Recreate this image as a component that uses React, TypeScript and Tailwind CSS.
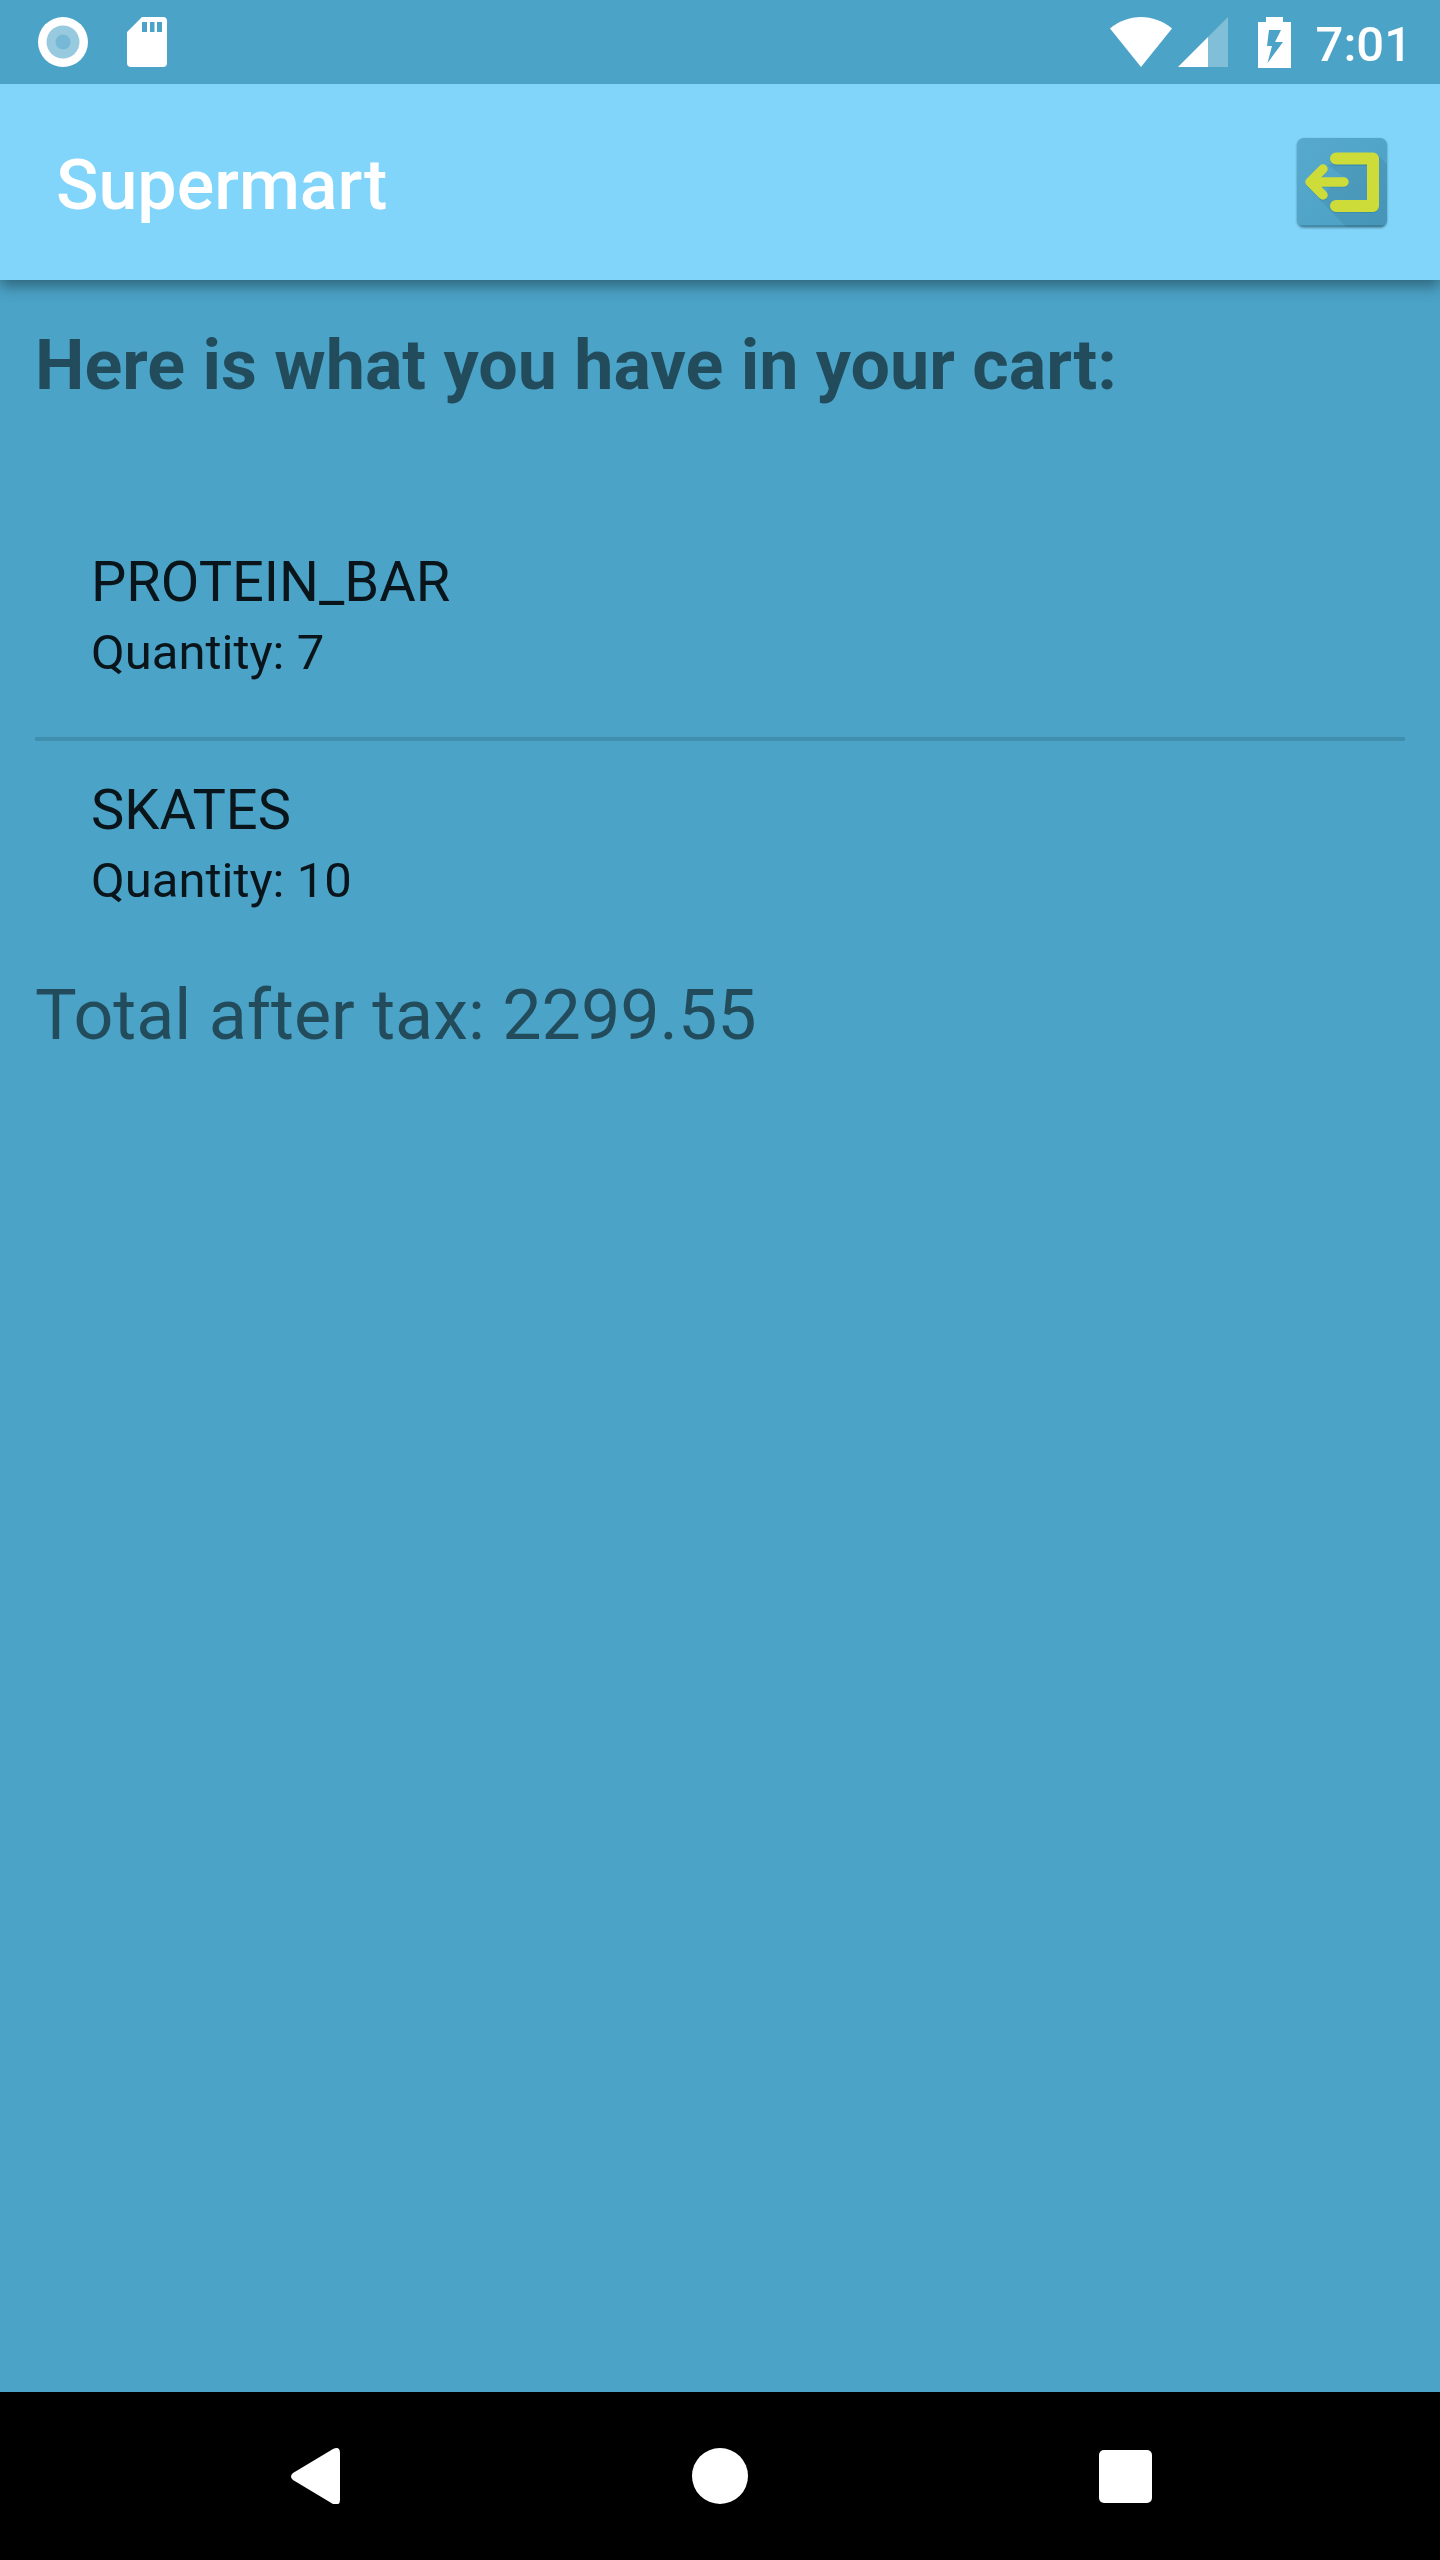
const items = [
  { name: 'PROTEIN_BAR', quantity: 7 },
  { name: 'SKATES', quantity: 10 },
];

function StatusBar() {
  return (
    <div className="relative z-10 flex h-[84px] items-center justify-between bg-[#4ba3c7] pl-[38px] pr-7 text-white">
      <div className="flex items-center gap-[39px]">
        <svg className="size-[50px]" viewBox="0 0 50 50" aria-hidden="true">
          <circle cx="25" cy="25" r="25" fill="#fff" />
          <circle cx="25" cy="25" r="16.5" fill="#97cade" />
          <circle cx="25" cy="25" r="7.5" fill="#76b8d5" />
        </svg>
        <svg className="h-[50px] w-10" viewBox="0 0 40 50" aria-hidden="true">
          <path
            fill="#fff"
            fillRule="evenodd"
            d="M15 0H36Q40 0 40 4V46Q40 50 36 50H4Q0 50 0 46V15ZM15 5V15H20V5ZM23 5V15H27.500V5ZM30 5V15H35V5Z"
          />
        </svg>
      </div>
      <div className="flex items-center">
        <svg className="h-[50px] w-[62px]" viewBox="0 0 62 50" aria-hidden="true">
          <path fill="#fff" d="M31 50L0 11.500C9 4 20 0 31 0S53 4 62 11.500Z" />
        </svg>
        <svg className="ml-1.5 h-[50px] w-[50px]" viewBox="0 0 50 50" aria-hidden="true">
          <path fill="#fff" fillOpacity=".3" d="M50 0V50H30V20Z" />
          <path fill="#fff" d="M0 50L30 20V50Z" />
        </svg>
        <svg className="ml-[30px] h-[51px] w-[33px]" viewBox="0 0 33 51" aria-hidden="true">
          <path
            fill="#fff"
            fillRule="evenodd"
            d="M8 0H25V5H33V51H0V5H8ZM11 13L9 29H14L9.500 46L25 25H17L23 13Z"
          />
        </svg>
        <time className="ml-[25px] pt-1 text-[49px] leading-[57px] font-medium">7:01</time>
      </div>
    </div>
  );
}

function ExitIcon() {
  return (
    <svg className="size-[90px] drop-shadow-[0_1px_1px_rgba(0,0,0,0.35)]" viewBox="0 0 90 90" aria-hidden="true">
      <defs>
        <linearGradient id="tile" x1="0" y1="0" x2="1" y2="1">
          <stop offset="0" stopColor="#57aacd" />
          <stop offset="1" stopColor="#4a9fc4" />
        </linearGradient>
        <clipPath id="tile-clip">
          <rect width="90" height="89" rx="7" />
        </clipPath>
      </defs>
      <g clipPath="url(#tile-clip)">
        <rect width="90" height="90" fill="url(#tile)" />
        <path fill="#000" fillOpacity=".06" d="M81 17L90 26V90H50L22 61L34 48H50V41L30 27L39 26H70V63H39L76 74Z" />
        <path stroke="#000" strokeOpacity=".14" strokeWidth="2" d="M0 88H90" />
      </g>
      <g fill="none" stroke="#1f6f90" strokeOpacity=".3" strokeWidth="12" strokeLinecap="round" strokeLinejoin="round">
        <path d="M39 22H76V69H39" />
        <path d="M47 45H13M26 32L13 45L26 58" strokeWidth="9" />
      </g>
      <g fill="none" stroke="#cddc39" strokeLinecap="round" strokeLinejoin="round">
        <path strokeWidth="12" d="M39 20.500H76V68H39" />
        <path strokeWidth="9.500" d="M47 44H13M26 31L13 44L26 57" />
      </g>
    </svg>
  );
}

export default function App() {
  return (
    <div className="flex min-h-screen flex-col bg-[#4ba3c7] font-[Roboto,sans-serif]">
      <StatusBar />
      <header className="flex h-[196px] items-center justify-between bg-[#81d4fa] pl-14 pr-[53px] shadow-[0_6px_14px_rgba(0,0,0,0.4)]">
        <h1 className="pt-1.5 text-[70px] leading-[82px] font-medium text-white">Supermart</h1>
        <button type="button" aria-label="Log out" className="pt-0.5">
          <ExitIcon />
        </button>
      </header>

      <main className="flex-1 px-[35px] pt-11">
        <h2 className="text-[70px] leading-[82px] font-bold text-black/54">Here is what you have in your cart:</h2>
        <ul className="mt-[107px] divide-y-4 divide-black/12">
          {items.map((item) => (
            <li key={item.name} className="px-14 pt-9 pb-14 text-black/87">
              <p className="text-[56px] leading-[66px]">{item.name}</p>
              <p className="mt-[9px] text-[49px] leading-[57px]">Quantity: {item.quantity}</p>
            </li>
          ))}
        </ul>
        <p className="mt-[9px] text-[70px] leading-[82px] text-black/54">Total after tax: 2299.55</p>
      </main>

      <nav className="flex h-[168px] items-center justify-center gap-[351px] bg-black" aria-label="System">
        <button type="button" aria-label="Back">
          <svg className="size-14" viewBox="0 0 56 56" aria-hidden="true">
            <path fill="#fff" d="M8 25L48 1Q55 -2 55 5V52Q55 58 48 56L8 32Q4 28.500 8 25Z" />
          </svg>
        </button>
        <button type="button" aria-label="Home">
          <svg className="size-14" viewBox="0 0 56 56" aria-hidden="true">
            <circle cx="28" cy="28" r="28" fill="#fff" />
          </svg>
        </button>
        <button type="button" aria-label="Recent apps">
          <svg className="size-14" viewBox="0 0 56 56" aria-hidden="true">
            <rect x="0" y="2" width="53" height="53" rx="5" fill="#fff" />
          </svg>
        </button>
      </nav>
    </div>
  );
}
